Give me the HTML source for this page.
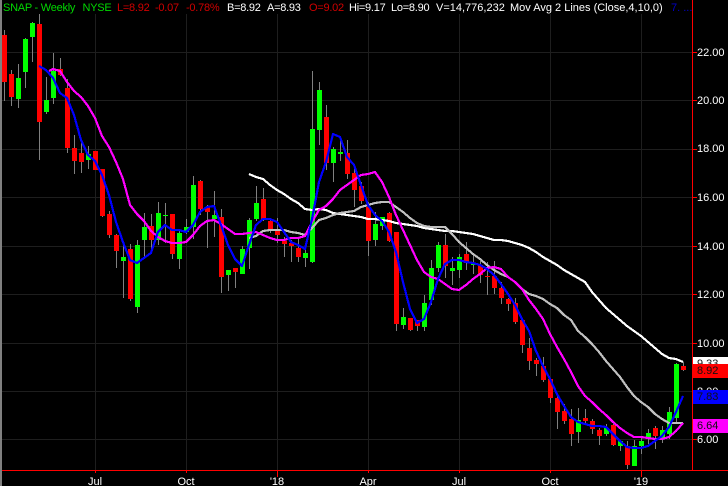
<!DOCTYPE html>
<html><head><meta charset="utf-8"><style>
html,body{margin:0;padding:0;background:#000;width:728px;height:486px;overflow:hidden}
#c{position:relative;width:728px;height:486px;overflow:hidden;background:#000;font:11px "Liberation Sans",sans-serif;line-height:13px}
#c svg{position:absolute;left:0;top:0}
.t{position:absolute;white-space:pre;color:#fff}
.h{top:2px;font-size:11px}
.n{letter-spacing:-.25px}
.r{left:697px;font-size:11px;color:#fff}
.b{position:absolute;left:693px;width:35px;height:14px}
.k{color:#111;top:1px;left:4px}
.x{top:476px;width:40px;text-align:center;color:#fff}
</style></head><body><div id="c">
<svg width="728" height="486" xmlns="http://www.w3.org/2000/svg">
<rect x="0" y="0" width="2" height="486" fill="#808080"/>
<path shape-rendering="crispEdges" stroke="#1e1e1e" fill="none" d="M2 52.5H692M2 100.5H692M2 149.5H692M2 197.5H692M2 246.5H692M2 294.5H692M2 343.5H692M2 391.5H692M2 439.5H692M95.5 14V470M186.5 14V470M277.5 14V470M368.5 14V470M459.5 14V470M550.5 14V470M641.5 14V470"/>
<path shape-rendering="crispEdges" stroke="#808080" fill="none" d="M4.5 30V101M11.5 70V106M18.5 64V108M25.5 38V88M32.5 22V62M39.5 14V160M46.5 77V114M53.5 53V104M60.5 58V76M67.5 79V153M74.5 135V174M81.5 141V173M88.5 146V169M95.5 151V170M102.5 169V217M109.5 211V238M116.5 234V268M123.5 244V298M130.5 244V301M137.5 240V313M144.5 213V257M151.5 214V252M158.5 202V245M165.5 203V243M172.5 214V259M179.5 231V269M186.5 219V234M193.5 176V239M200.5 180V215M207.5 205V248M214.5 191V237M221.5 209V293M228.5 270V291M235.5 268V288M242.5 246V274M249.5 218V269M256.5 186V221M263.5 188V221M270.5 218V233M277.5 218V243M284.5 237V257M291.5 240V262M298.5 238V262M305.5 247V267M312.5 71V263M319.5 82V145M326.5 105V170M333.5 147V182M340.5 141V161M347.5 140V179M354.5 167V207M361.5 182V204M368.5 202V256M375.5 212V246M382.5 217V230M389.5 212V242M396.5 232V331M403.5 308V329M410.5 318V331M417.5 320V331M424.5 295V331M431.5 260V305M438.5 242V272M445.5 234V278M452.5 257V285M459.5 254V278M466.5 242V270M473.5 255V274M480.5 261V283M487.5 262V295M494.5 261V294M501.5 282V304M508.5 298V311M515.5 298V324M522.5 320V353M529.5 338V370M536.5 358V376M543.5 357V382M550.5 379V403M557.5 394V429M564.5 404V424M571.5 409V446M578.5 408V443M585.5 409V423M592.5 419V434M599.5 428V445M606.5 424V436M613.5 424V446M620.5 441V451M627.5 441V469M634.5 440V466M641.5 437V454M648.5 429V444M655.5 426V449M662.5 426V443M669.5 407V439M676.5 363V424M683.5 362V371"/>
<path shape-rendering="crispEdges" fill="#00ff00" d="M16 78h5V99h-5zM23 39h5V72h-5zM30 23h5V37h-5zM44 100h5V112h-5zM51 71h5V98h-5zM86 154h5V160h-5zM121 257h5V261h-5zM135 245h5V307h-5zM142 227h5V240h-5zM156 213h5V240h-5zM163 215h5V216h-5zM177 233h5V259h-5zM184 227h5V232h-5zM191 185h5V227h-5zM212 215h5V219h-5zM226 270h5V275h-5zM240 249h5V274h-5zM247 220h5V248h-5zM254 203h5V219h-5zM303 253h5V258h-5zM310 129h5V262h-5zM317 90h5V130h-5zM331 149h5V163h-5zM338 152h5V154h-5zM373 224h5V240h-5zM380 217h5V226h-5zM401 317h5V325h-5zM422 303h5V327h-5zM429 268h5V300h-5zM436 245h5V268h-5zM450 268h5V271h-5zM457 257h5V270h-5zM471 264h5V265h-5zM576 420h5V432h-5zM604 428h5V434h-5zM618 441h5V446h-5zM632 446h5V466h-5zM639 441h5V446h-5zM646 433h5V438h-5zM660 430h5V439h-5zM667 412h5V434h-5zM674 364h5V418h-5z"/>
<path shape-rendering="crispEdges" fill="#ff0000" d="M2 35h5V82h-5zM9 74h5V97h-5zM37 24h5V122h-5zM58 69h5V75h-5zM65 88h5V148h-5zM72 148h5V161h-5zM79 153h5V162h-5zM93 151h5V170h-5zM100 169h5V216h-5zM107 214h5V235h-5zM114 235h5V251h-5zM128 249h5V299h-5zM149 226h5V240h-5zM170 214h5V254h-5zM198 181h5V209h-5zM205 207h5V212h-5zM219 217h5V277h-5zM233 268h5V272h-5zM261 199h5V219h-5zM268 221h5V231h-5zM275 231h5V235h-5zM282 241h5V244h-5zM289 243h5V246h-5zM296 248h5V257h-5zM324 117h5V163h-5zM345 153h5V174h-5zM352 173h5V190h-5zM359 186h5V201h-5zM366 207h5V241h-5zM387 213h5V241h-5zM394 232h5V324h-5zM408 318h5V330h-5zM415 320h5V326h-5zM443 245h5V266h-5zM464 254h5V263h-5zM478 265h5V275h-5zM485 276h5V277h-5zM492 276h5V288h-5zM499 288h5V298h-5zM506 299h5V304h-5zM513 303h5V322h-5zM520 320h5V345h-5zM527 348h5V361h-5zM534 360h5V364h-5zM541 366h5V380h-5zM548 379h5V398h-5zM555 398h5V412h-5zM562 411h5V421h-5zM569 419h5V434h-5zM583 418h5V421h-5zM590 421h5V429h-5zM597 430h5V436h-5zM611 425h5V445h-5zM625 446h5V465h-5zM653 428h5V436h-5zM681 366h5V370h-5z"/>
<g fill="none" stroke-width="2.2" stroke-linejoin="round" shape-rendering="crispEdges">
<polyline stroke="#ffffff" points="249,174 256,177 263,179 270,185 277,190 284,194 291,199 298,203 305,209 312,210 319,209 326,210 333,213 340,214 347,215 354,216 361,217 368,219 375,219 382,220 389,221 396,223 403,224 410,225 417,226 424,228 431,229 438,230 445,231 452,231 459,232 466,233 473,234 480,236 487,238 494,240 501,240 508,241 515,243 522,245 529,248 536,252 543,257 550,261 557,265 564,270 571,274 578,278 585,282 592,292 599,300 606,308 613,314 620,320 627,326 634,331 641,336 648,342 655,348 662,354 669,358 676,359 683,362"/>
<polyline stroke="#c0c0c0" points="249,238 256,236 263,231 270,230 277,230 284,230 291,232 298,233 305,235 312,228 319,220 326,218 333,215 340,213 347,212 354,211 361,207 368,205 375,203 382,202 389,202 396,207 403,212 410,218 417,223 424,226 431,227 438,227 445,227 452,234 459,242 466,248 473,254 480,259 487,265 494,270 501,274 508,277 515,282 522,289 529,294 536,296 543,299 550,304 557,308 564,315 571,320 578,331 585,337 592,344 599,352 606,361 613,369 620,377 627,387 634,396 641,402 648,407 655,414 662,419 669,423 676,423 683,423"/>
<polyline stroke="#ff00ff" points="49,71 53,69 60,71 67,82 74,91 81,97 88,106 95,118 102,136 109,147 116,162 123,179 130,205 137,214 144,221 151,231 158,237 165,241 172,243 179,243 186,242 193,235 200,226 207,221 214,220 221,224 228,229 235,234 242,234 249,233 256,232 263,235 270,238 277,240 284,240 291,238 298,238 305,236 312,222 319,210 326,206 333,199 340,190 347,185 354,180 361,175 368,174 375,172 382,182 389,197 396,215 403,230 410,245 417,260 424,272 431,277 438,279 445,284 452,289 459,290 466,285 473,279 480,274 487,268 494,267 501,269 508,277 515,282 522,289 529,300 536,309 543,319 550,334 557,347 564,359 571,372 578,386 585,396 592,402 599,409 606,415 613,422 620,428 627,433 634,437 641,437 648,438 655,439 662,439 669,437 676,431 683,423"/>
<polyline stroke="#0000ff" points="39,66 46,70 53,78 60,93 67,98 74,115 81,140 88,155 95,161 102,175 109,195 116,222 123,242 130,260 137,263 144,258 151,253 158,232 165,225 172,230 179,230 186,232 193,225 200,212 207,207 214,206 221,225 228,245 235,259 242,266 249,245 256,225 263,219 270,219 277,222 284,232 291,242 298,245 305,249 312,219 319,182 326,162 333,134 340,137 347,157 354,165 361,185 368,205 375,215 382,221 389,232 396,252 403,282 410,309 417,323 424,319 431,302 438,279 445,264 452,260 459,260 466,262 473,263 480,265 487,269 494,275 501,284 508,294 515,305 522,319 529,331 536,351 543,366 550,379 557,394 564,406 571,417 578,422 585,424 592,426 599,426 606,427 613,434 620,441 627,447 634,448 641,448 648,446 655,441 662,436 669,427 676,412 683,396"/>
</g>
<path shape-rendering="crispEdges" stroke="#ff0000" fill="none" d="M692.5 0V470M2 470.5H728M692 52.5H697M692 100.5H697M692 149.5H697M692 197.5H697M692 246.5H697M692 294.5H697M692 343.5H697M692 391.5H697M692 439.5H697M95.5 470V473M186.5 470V473M277.5 470V477M368.5 470V473M459.5 470V473M550.5 470V473M641.5 470V477"/>
</svg>
<span class="t h n" style="left:3px;color:#00d800">SNAP - Weekly</span>
<span class="t h n" style="left:82.5px;color:#00d800">NYSE</span>
<span class="t h n" style="left:117px;color:#d00000">L=8.92</span>
<span class="t h n" style="left:155px;color:#d00000">-0.07</span>
<span class="t h n" style="left:186px;color:#d00000">-0.78%</span>
<span class="t h n" style="left:227px">B=8.92</span>
<span class="t h n" style="left:267px">A=8.93</span>
<span class="t h n" style="left:309px;color:#d00000">O=9.02</span>
<span class="t h n" style="left:349px">Hi=9.17</span>
<span class="t h n" style="left:391px">Lo=8.90</span>
<span class="t h" style="left:436px">V=14,776,232</span>
<span class="t h" style="left:510px">Mov Avg 2 Lines (Close,4,10,0)</span>
<span class="t h" style="left:671px;color:#0000c8">7. ...</span>
<span class="t r" style="top:47px">22.00</span>
<span class="t r" style="top:95px">20.00</span>
<span class="t r" style="top:143px">18.00</span>
<span class="t r" style="top:192px">16.00</span>
<span class="t r" style="top:241px">14.00</span>
<span class="t r" style="top:289px">12.00</span>
<span class="t r" style="top:338px">10.00</span>
<span class="t r" style="top:386px">8.00</span>
<span class="t r" style="top:434px">6.00</span>
<div class="b" style="top:357px;height:7px;background:#fff;overflow:hidden"><span class="t k" style="top:1px">9.33</span></div>
<div class="b" style="top:364px;background:#ff0000"><span class="t k">8.92</span></div>
<div class="b" style="top:390px;background:#0000ff"><span class="t k">7.83</span></div>
<div class="b" style="top:419px;background:#ff00ff"><span class="t k">6.64</span></div>
<span class="t x" style="left:75px">Jul</span>
<span class="t x" style="left:166px">Oct</span>
<span class="t x" style="left:257px">'18</span>
<span class="t x" style="left:348px">Apr</span>
<span class="t x" style="left:439px">Jul</span>
<span class="t x" style="left:530px">Oct</span>
<span class="t x" style="left:621px">'19</span>
</div></body></html>
